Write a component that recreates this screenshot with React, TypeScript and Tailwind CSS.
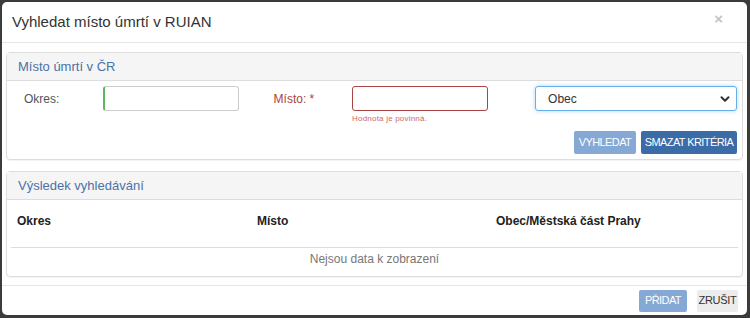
import { ChevronDown } from "lucide-react";

const font = { fontFamily: '"Liberation Sans", Arial, sans-serif' };

function PanelHeader({ title }: { title: string }) {
    return (
        <div className="flex h-[28px] items-center border-b border-[#dddddd] bg-[#f5f5f5] pl-[11px] text-[13px] text-[#4a72a8]">
            {title}
        </div>
    );
}

export default function App() {
    return (
        <div
            className="h-[318px] w-[750px] bg-[#3b3b3b] pb-[3px] pl-[2px] pr-[3px] pt-[2px]"
            style={font}
        >
            <div className="flex h-full flex-col overflow-hidden rounded-[5px] bg-white">
                {/* Header */}
                <div className="flex h-[41px] shrink-0 items-center justify-between border-b border-[#e5e5e5] pl-[10px] pr-[24px]">
                    <h4 className="text-[15px] text-[#333333]">
                        Vyhledat místo úmrtí v RUIAN
                    </h4>
                    <span className="mb-[8px] text-[15px] font-bold leading-none text-[#c4c4c4]">
                        ×
                    </span>
                </div>

                {/* Body */}
                <div className="flex flex-col gap-[11px] px-[4px] pt-[9px]">
                    <div className="rounded-[4px] border border-[#dddddd] shadow-[0_1px_1px_rgba(0,0,0,0.05)]">
                        <PanelHeader title="Místo úmrtí v ČR" />
                        <div className="h-[78px] px-[5px] pt-[5px]">
                            <div className="flex h-[37px] items-start">
                                <label className="flex h-[25px] w-[91px] items-center pl-[12px] text-[12px] text-[#555555]">
                                    Okres:
                                </label>
                                <input
                                    type="text"
                                    className="h-[25px] w-[136px] rounded-[3px] border border-[#cccccc] border-l-[2px] border-l-[#5cb85c] outline-none"
                                />
                                <label className="ml-[35px] flex h-[25px] w-[79px] items-center text-[12px] text-[#a94442]">
                                    Místo: *
                                </label>
                                <div className="flex flex-col">
                                    <input
                                        type="text"
                                        className="h-[25px] w-[136px] rounded-[3px] border border-[#a94442] outline-none"
                                    />
                                    <span className="mt-[2px] text-[8px] tracking-[0.2px] text-[#c96a6a]">
                                        Hodnota je povinná.
                                    </span>
                                </div>
                                <div className="ml-[47px] flex h-[25px] w-[203px] items-center justify-between rounded-[3px] border border-[#66afe9] pl-[12px] pr-[4px] text-[12px] text-[#333333] shadow-[0_0_4px_rgba(102,175,233,0.5)]">
                                    Obec
                                    <ChevronDown
                                        className="h-[14px] w-[14px] text-[#333333]"
                                        strokeWidth={3.5}
                                    />
                                </div>
                            </div>
                            <div className="mt-[8px] flex justify-end gap-[5px]">
                                <button
                                    type="button"
                                    className="h-[23px] w-[62px] rounded-[2px] bg-[#86a8d4] text-[11px] tracking-[-0.6px] text-white"
                                >
                                    VYHLEDAT
                                </button>
                                <button
                                    type="button"
                                    className="h-[23px] w-[96px] rounded-[2px] bg-[#3c6ca8] text-[11px] tracking-[-0.6px] text-white"
                                >
                                    SMAZAT KRITÉRIA
                                </button>
                            </div>
                        </div>
                    </div>

                    <div className="rounded-[4px] border border-[#dddddd] shadow-[0_1px_1px_rgba(0,0,0,0.05)]">
                        <PanelHeader title="Výsledek vyhledávání" />
                        <div className="h-[76px] px-[4px]">
                            <div className="grid h-[48px] grid-cols-[240px_239px_1fr] border-b border-[#dddddd] pt-[12px] text-[12px] font-bold text-[#222222]">
                                <div className="pl-[6px]">Okres</div>
                                <div className="pl-[6px]">Místo</div>
                                <div className="pl-[6px]">Obec/Městská část Prahy</div>
                            </div>
                            <div className="flex h-[22px] items-center justify-center text-[12px] text-[#777777]">
                                Nejsou data k zobrazení
                            </div>
                        </div>
                    </div>
                </div>

                {/* Footer */}
                <div className="mt-auto flex h-[30px] items-center justify-end gap-[10px] border-t border-[#e5e5e5] pr-[9px]">
                    <button
                        type="button"
                        className="h-[22px] w-[48px] rounded-[2px] bg-[#86a8d4] text-[11px] tracking-[-0.6px] text-white"
                    >
                        PŘIDAT
                    </button>
                    <button
                        type="button"
                        className="h-[22px] w-[41px] rounded-[2px] bg-[#ececec] text-[11px] tracking-[-0.3px] text-[#333333]"
                    >
                        ZRUŠIT
                    </button>
                </div>
            </div>
        </div>
    );
}
